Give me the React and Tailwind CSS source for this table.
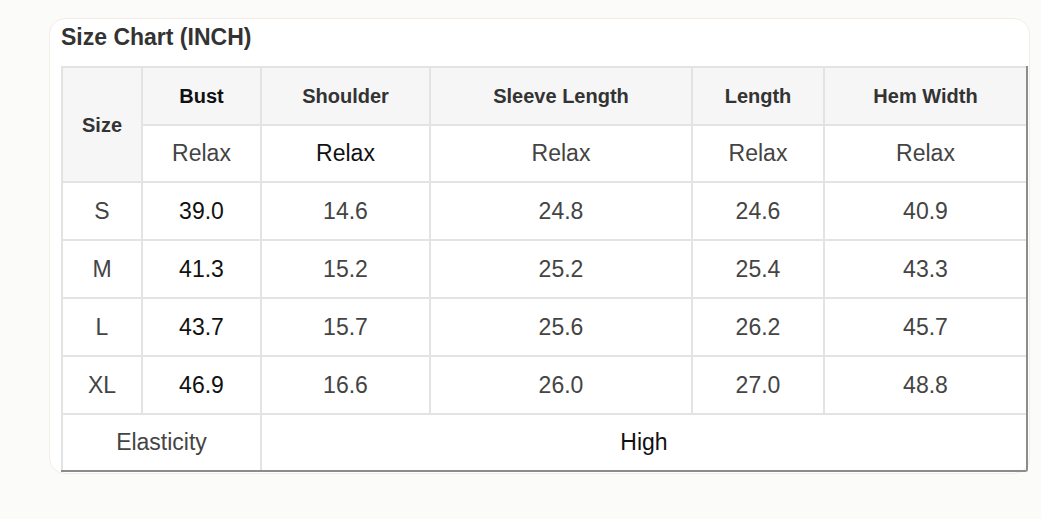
import React from "react";

const cols = ["Bust", "Shoulder", "Sleeve Length", "Length", "Hem Width"];

const rows = [
  { size: "S", vals: ["39.0", "14.6", "24.8", "24.6", "40.9"] },
  { size: "M", vals: ["41.3", "15.2", "25.2", "25.4", "43.3"] },
  { size: "L", vals: ["43.7", "15.7", "25.6", "26.2", "45.7"] },
  { size: "XL", vals: ["46.9", "16.6", "26.0", "27.0", "48.8"] },
];

const cell = "flex items-center justify-center border-[#e3e3e3]";

const App = () => {
  return (
    <div
      className="min-h-screen w-full bg-[#fbfbfa] pt-[18px] pl-[49px]"
      style={{ fontFamily: '"Liberation Sans", Arial, sans-serif' }}
    >
      <div className="w-[981px] h-[456px] bg-white rounded-[16px] border border-[#f6ece7] pl-[11px] pt-[5px]">
        <h1 className="text-[23px] leading-[26px] font-bold text-[#333] mb-[16px]">
          Size Chart (INCH)
        </h1>

        <div className="w-[967px] border-r-2 border-b-2 border-[#8c8c8c] rounded-br-[3px]">
          <div className="grid grid-cols-[80px_119px_169px_262px_132px_201px] grid-rows-[58px_57px_58px_58px_58px_58px_55px] border-l-2 border-t-2 border-[#e3e3e3]">
            {/* size header spans two rows */}
            <div className={`${cell} row-span-2 border-r-2 border-b-2 bg-[#f6f6f6] text-[20px] font-bold text-[#333]`}>
              Size
            </div>
            {cols.map((c, i) => (
              <div
                key={c}
                className={`${cell} border-b-2 ${i < cols.length - 1 ? "border-r-2" : ""} bg-[#f6f6f6] text-[20px] font-bold ${i === 0 ? "text-[#111]" : "text-[#333]"}`}
              >
                {c}
              </div>
            ))}
            {cols.map((c, i) => (
              <div
                key={c + "-relax"}
                className={`${cell} border-b-2 ${i < cols.length - 1 ? "border-r-2" : ""} text-[23px] ${i === 1 ? "text-[#111]" : "text-[#444]"}`}
              >
                Relax
              </div>
            ))}

            {rows.map((r) => (
              <React.Fragment key={r.size}>
                <div className={`${cell} border-r-2 border-b-2 text-[23px] text-[#444]`}>
                  {r.size}
                </div>
                {r.vals.map((v, i) => (
                  <div
                    key={r.size + i}
                    className={`${cell} border-b-2 ${i < r.vals.length - 1 ? "border-r-2" : ""} text-[23px] ${i === 0 ? "text-[#111]" : "text-[#444]"}`}
                  >
                    {v}
                  </div>
                ))}
              </React.Fragment>
            ))}

            <div className={`${cell} col-span-2 border-r-2 text-[23px] text-[#444]`}>
              Elasticity
            </div>
            <div className={`${cell} col-span-4 text-[23px] text-[#111]`}>
              High
            </div>
          </div>
        </div>
      </div>
    </div>
  );
};

export default App;
